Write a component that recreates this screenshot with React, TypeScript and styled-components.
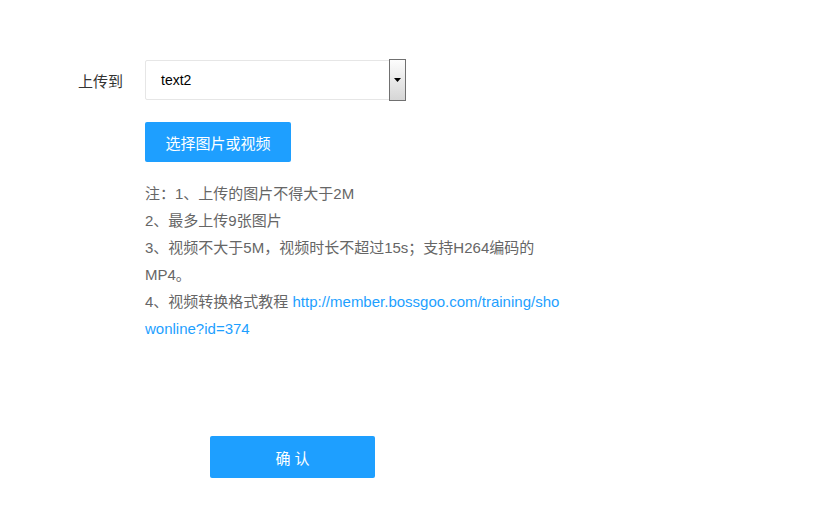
import React from "react";
import styled, { createGlobalStyle } from "styled-components";

const GlobalStyle = createGlobalStyle`
body {
    margin: 0;
    background: #fff;
    font-family: "Liberation Sans", Arial, "Noto Sans CJK SC", sans-serif;
}
`

const notes = [
    "注：1、上传的图片不得大于2M",
    "2、最多上传9张图片",
    "3、视频不大于5M，视频时长不超过15s；支持H264编码的MP4。",
]

const App = () => {
    return (
        <Page>
            <GlobalStyle />
            <Row>
                <Label>上传到</Label>
                <Select>
                    <SelectValue>text2</SelectValue>
                    <ArrowButton>
                        <svg width="7" height="4" viewBox="0 0 7 4">
                            <polygon points="0,0 7,0 3.5,4" fill="#000" />
                        </svg>
                    </ArrowButton>
                </Select>
            </Row>
            <Field>
                <PickButton>选择图片或视频</PickButton>
                <Notes>
                    {notes.map((n) => (
                        <div key={n}>{n}</div>
                    ))}
                    <div>
                        4、视频转换格式教程{" "}
                        <Link href="#">http://member.bossgoo.com/training/showonline?id=374</Link>
                    </div>
                </Notes>
            </Field>
            <Footer>
                <ConfirmButton>确 认</ConfirmButton>
            </Footer>
        </Page>
    )
}

const Page = styled.div`
padding: 60px 0 0 78px;
width: 840px;
height: 516px;
box-sizing: border-box;
`

const Row = styled.div`
display: flex;
align-items: center;
`

const Label = styled.label`
width: 67px;
font-size: 15px;
color: #333;
`

const Select = styled.div`
width: 261px;
height: 40px;
box-sizing: border-box;
border: 1px solid #e6e6e6;
border-radius: 2px;
display: flex;
align-items: stretch;
`

const SelectValue = styled.div`
flex: 1;
padding-left: 15px;
display: flex;
align-items: center;
font-size: 14px;
color: #000;
`

const ArrowButton = styled.div`
width: 17px;
margin: -2px -1px -2px 0;
box-sizing: border-box;
border: 1px solid #707070;
background: linear-gradient(#fdfdfd, #d6d6d6);
display: flex;
align-items: center;
justify-content: center;
`

const Field = styled.div`
padding-left: 67px;
padding-top: 22px;
`

const PickButton = styled.button`
height: 40px;
width: 146px;
padding: 0;
border: none;
border-radius: 2px;
background: #1e9fff;
color: #fff;
font-size: 15px;
font-family: inherit;
cursor: pointer;
`

const Notes = styled.div`
margin-top: 18px;
width: 423px;
font-size: 15px;
line-height: 27px;
color: #666;
`

const Link = styled.a`
color: #1e9fff;
text-decoration: none;
word-break: break-all;
`

const Footer = styled.div`
padding: 94px 0 0 132px;
`

const ConfirmButton = styled.button`
height: 42px;
width: 165px;
padding: 0;
border: none;
border-radius: 2px;
background: #1e9fff;
color: #fff;
font-size: 15px;
font-family: inherit;
cursor: pointer;
`

export default App;
